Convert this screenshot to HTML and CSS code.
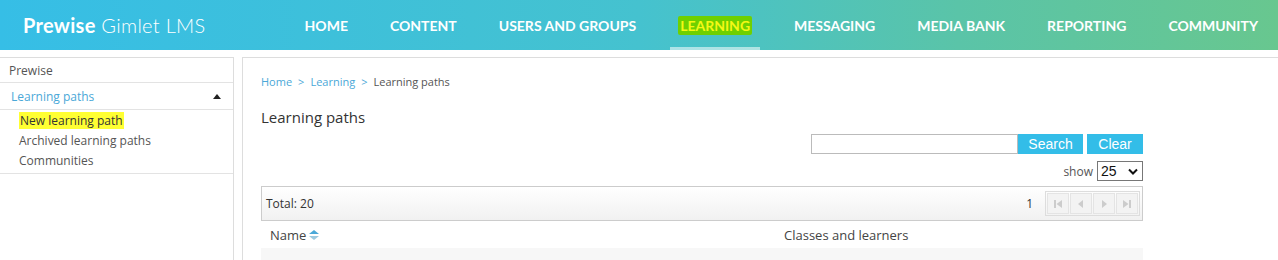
FILE: index.html
```html
<!DOCTYPE html>
<html>
<head>
<meta charset="utf-8">
<link rel="stylesheet" href="styles.css">
</head>
<body>
<header class="topbar">
  <div class="logo"><b>Prewise</b> Gimlet LMS</div>
  <nav class="nav">
    <a class="nav-item">HOME</a>
    <a class="nav-item">CONTENT</a>
    <a class="nav-item">USERS AND GROUPS</a>
    <a class="nav-item active"><span class="mark">LEARNING</span></a>
    <a class="nav-item">MESSAGING</a>
    <a class="nav-item">MEDIA BANK</a>
    <a class="nav-item">REPORTING</a>
    <a class="nav-item">COMMUNITY</a>
  </nav>
</header>
<div class="page">
  <aside class="sidebar">
    <div class="side-row side-top">Prewise</div>
    <div class="side-row side-section"><span>Learning paths</span><span class="caret"></span></div>
    <ul class="side-list">
      <li><span class="hl">New learning path</span></li>
      <li>Archived learning paths</li>
      <li>Communities</li>
    </ul>
  </aside>
  <main class="content">
    <div class="crumbs"><a>Home</a><span class="sep">&gt;</span><a>Learning</a><span class="sep">&gt;</span><span class="cur">Learning paths</span></div>
    <h1 class="title">Learning paths</h1>
    <div class="search-row">
      <input class="search-input" type="text">
      <button class="btn">Search</button>
      <button class="btn btn-clear">Clear</button>
    </div>
    <div class="show-row">
      <span class="show-label">show</span>
      <div class="select"><span>25</span><svg width="10" height="7" viewBox="0 0 10 7"><path d="M1 1.5 L5 5.5 L9 1.5" fill="none" stroke="#111" stroke-width="2"/></svg></div>
    </div>
    <div class="totalbar">
      <span class="total">Total: 20</span>
      <div class="pager">
        <span class="page-num">1</span>
        <div class="pbtns">
          <span class="pbtn"><svg width="10" height="10" viewBox="0 0 10 10"><rect x="1" y="1" width="2" height="8" fill="#ccc"/><path d="M9 1 L3.5 5 L9 9Z" fill="#ccc"/></svg></span>
          <span class="pbtn"><svg width="10" height="10" viewBox="0 0 10 10"><path d="M7 1 L2 5 L7 9Z" fill="#ccc"/></svg></span>
          <span class="pbtn"><svg width="10" height="10" viewBox="0 0 10 10"><path d="M3 1 L8 5 L3 9Z" fill="#ccc"/></svg></span>
          <span class="pbtn"><svg width="10" height="10" viewBox="0 0 10 10"><path d="M1 1 L6.5 5 L1 9Z" fill="#ccc"/><rect x="7" y="1" width="2" height="8" fill="#ccc"/></svg></span>
        </div>
      </div>
    </div>
    <div class="thead">
      <div class="th th-name">Name <svg width="10" height="10" viewBox="0 0 10 10"><path d="M0 4 L5 0 L10 4Z" fill="#4aa8d8"/><path d="M0 6 L5 10 L10 6Z" fill="#9cc9df"/></svg></div>
      <div class="th th-classes">Classes and learners</div>
    </div>
    <div class="trow"></div>
  </main>
</div>
</body>
</html>
```
FILE: styles.css
```css
* { box-sizing: border-box; }
body {
  margin: 0;
  font-family: "Open Sans", "Liberation Sans", sans-serif;
  color: #444;
  background: #fff;
  overflow: hidden;
}
.topbar {
  height: 50px;
  display: flex;
  align-items: center;
  background: linear-gradient(90deg, #36bee6 0%, #45c2cf 50%, #5ac4a8 75%, #68c78f 100%);
  color: #fff;
}
.logo {
  padding-left: 23px;
  font-family: "Lato", sans-serif;
  font-size: 20px;
  font-weight: 300;
  letter-spacing: 0.3px;
}
.logo b { font-weight: 700; }
.nav {
  display: flex;
  margin-left: auto;
  height: 50px;
  padding-right: 12px;
}
.nav-item {
  display: flex;
  align-items: center;
  padding: 0 8px;
  margin-left: 26px;
  font-family: "Lato", sans-serif;
  font-weight: 700;
  font-size: 14px;
  color: #fff;
  position: relative;
}
.nav-item.active::after {
  content: "";
  position: absolute;
  left: 0; right: 0; bottom: 0;
  height: 3px;
  background: rgba(255,255,255,0.55);
}
.mark {
  background: #6fd000;
  color: #f4f816;
  padding: 1px 2px;
  border-radius: 2px;
}
.page {
  display: flex;
  gap: 8px;
  margin-top: 7px;
  align-items: flex-start;
}
.sidebar {
  width: 234px;
  flex: none;
  border: 1px solid #ddd;
  border-left: none;
  height: 220px;
  font-size: 12px;
}
.side-row {
  border-bottom: 1px solid #e3e3e3;
  display: flex;
  align-items: center;
}
.side-top {
  height: 25px;
  padding-left: 9px;
  color: #555;
}
.side-section {
  height: 27px;
  padding-left: 11px;
  padding-right: 12px;
  color: #4aa8d8;
  justify-content: space-between;
}
.caret {
  width: 0; height: 0;
  border-left: 4px solid transparent;
  border-right: 4px solid transparent;
  border-bottom: 5px solid #222;
}
.side-list {
  list-style: none;
  margin: 0;
  padding: 1px 0 2px 19px;
  border-bottom: 1px solid #e3e3e3;
  color: #555;
}
.side-list li { height: 20px; line-height: 20px; }
.hl { background: #ffff33; color: #333; padding: 0 1px; }
.content {
  flex: 1;
  border-top: 1px solid #ddd;
  border-left: 1px solid #ddd;
  height: 210px;
  padding: 15px 135px 0 18px;
}
.crumbs {
  font-size: 11px;
  color: #555;
  display: flex;
  align-items: center;
  height: 16px;
}
.crumbs a { color: #4aa8d8; }
.sep { margin: 0 6px; color: #4aa8d8; }
.title {
  margin: 18px 0 0 0;
  font-weight: 400;
  font-size: 15px;
  color: #333;
  height: 20px;
  line-height: 20px;
}
.search-row {
  display: flex;
  justify-content: flex-end;
  margin-top: 7px;
  height: 20px;
}
.search-input {
  width: 207px;
  height: 20px;
  border: 1px solid #bbb;
  margin: 0;
  padding: 0;
}
.btn {
  border: none;
  background: #33bde8;
  color: #fff;
  font-family: "Liberation Sans", Arial, sans-serif;
  font-size: 14px;
  height: 20px;
  width: 65px;
  padding: 0;
}
.btn-clear { margin-left: 4px; width: 56px; }
.show-row {
  display: flex;
  justify-content: flex-end;
  align-items: center;
  margin-top: 7px;
  height: 20px;
}
.show-label { font-size: 12px; color: #555; margin-right: 4px; }
.select {
  width: 46px;
  height: 20px;
  border: 1px solid #777;
  display: flex;
  align-items: center;
  justify-content: space-between;
  padding: 0 4px 0 3px;
  font-family: "Liberation Sans", Arial, sans-serif;
  font-size: 14px;
  color: #111;
}
.totalbar {
  margin-top: 5px;
  height: 35px;
  border: 1px solid #ccc;
  background: linear-gradient(#fff, #f1f1f1);
  display: flex;
  align-items: center;
  justify-content: space-between;
  padding: 0 2px 0 4px;
  font-size: 12px;
  color: #333;
}
.pager { display: flex; align-items: center; }
.page-num { margin-right: 12px; }
.pbtns {
  display: flex;
  border: 1px solid #ddd;
  height: 25px;
  padding: 1px;
  gap: 1px;
}
.pbtn {
  width: 22px;
  border: 1px solid #e4e4e4;
  background: #f3f3f3;
  display: flex;
  align-items: center;
  justify-content: center;
}
.thead {
  display: flex;
  height: 27px;
  align-items: center;
  font-size: 13px;
  color: #444;
}
.th-name {
  padding-left: 9px;
  width: 523px;
  display: flex;
  align-items: center;
  gap: 3px;
}
.trow {
  height: 20px;
  background: #f7f7f7;
}
```
